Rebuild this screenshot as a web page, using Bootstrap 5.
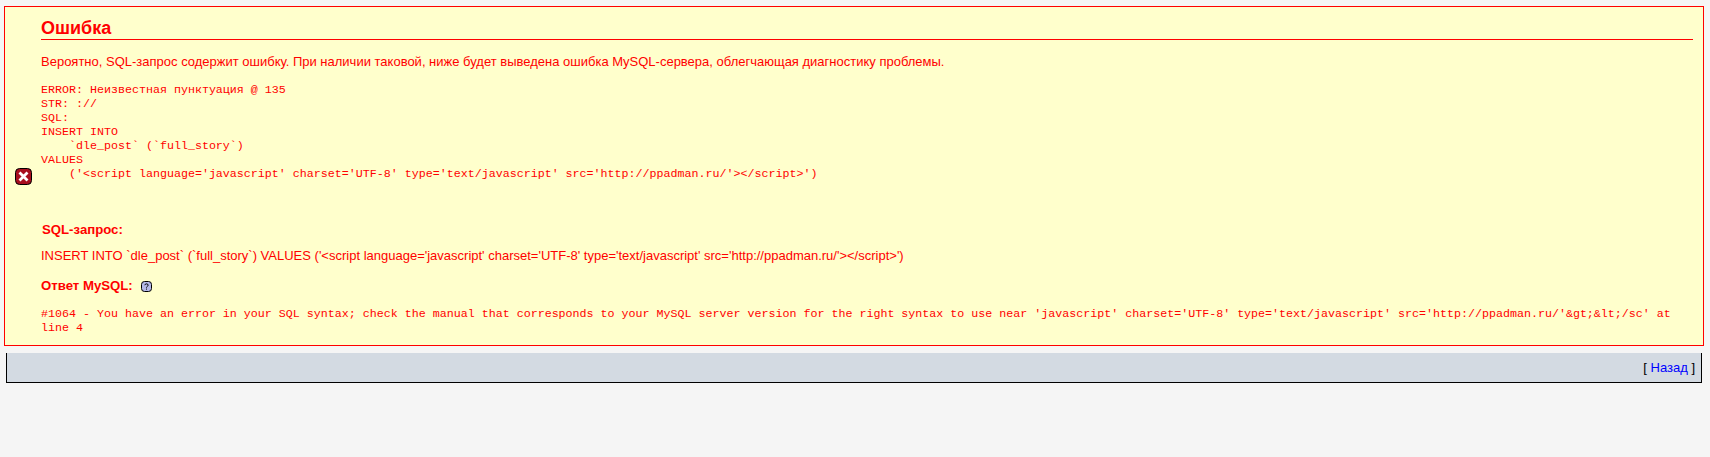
<!DOCTYPE html>
<html lang="ru">
<head>
<meta charset="utf-8">
<title>Ошибка</title>
<link href="https://cdn.jsdelivr.net/npm/bootstrap@5.3.0/dist/css/bootstrap.min.css" rel="stylesheet">
<style>
html,body{height:100%}
body{background:#f5f5f5;font-family:"Liberation Sans",Arial,sans-serif;font-size:13px;line-height:15px;color:#000;padding:6px 6px 0 4px}
.err-box{width:1700px;height:340px;background:#ffc;border:1px solid #f00;color:#f00}
.err-ico{width:36px;padding-left:10px}
.err-ico svg{display:block}
.err-main{padding-top:11px;padding-right:10px;align-self:flex-start;min-width:0;flex:1 1 auto}
.err-title{font-size:18px;line-height:20px;font-weight:700;margin:0;padding-bottom:1px;border-bottom:1px solid #f00;color:#f00}
.err-lead{margin:14px 0 0}
.err-pre{font-family:"Liberation Mono","Courier New",monospace;font-size:11.67px;line-height:14px;margin:14px 0 0;color:#f00;overflow:visible;white-space:pre}
.err-sub{font-size:13.2px;line-height:16px;font-weight:700;margin:0}
.err-sub1{margin:41px 0 0 1px}
.err-query{margin:10px 0 0}
.err-sub2{margin:15px 0 0;display:flex;align-items:center;gap:8px}
.err-resp{font-family:"Liberation Mono","Courier New",monospace;font-size:11.67px;line-height:14px;margin:13px 0 0;color:#f00;padding-right:9px}
.back-bar{width:1696px;height:30px;margin:7px 0 0 2px;background:#d3dae2;border-left:1px solid #000;border-right:1px solid #000;border-bottom:1px solid #000;padding-right:6px}
.back-bar a{color:#00f;text-decoration:none}
</style>
</head>
<body>
<div class="err-box d-flex align-items-center">
  <div class="err-ico flex-shrink-0">
    <svg width="17" height="17" viewBox="0 0 17 17"><rect x=".5" y=".5" width="16" height="16" rx="4" fill="#a80e1e" stroke="#000"/><path d="M4.500 4.500l8 8M12.500 4.500l-8 8" stroke="#fff" stroke-width="2.8"/></svg>
  </div>
  <div class="err-main">
    <h1 class="err-title">Ошибка</h1>
    <p class="err-lead">Вероятно, SQL-запрос содержит ошибку. При наличии таковой, ниже будет выведена ошибка MySQL-сервера, облегчающая диагностику проблемы.</p>
<pre class="err-pre">ERROR: Неизвестная пунктуация @ 135
STR: ://
SQL:
INSERT INTO
    `dle_post` (`full_story`)
VALUES
    ('&lt;script language='javascript' charset='UTF-8' type='text/javascript' src='http://ppadman.ru/'&gt;&lt;/script&gt;')</pre>
    <p class="err-sub err-sub1">SQL-запрос:</p>
    <p class="err-query">INSERT INTO `dle_post` (`full_story`) VALUES ('&lt;script language='javascript' charset='UTF-8' type='text/javascript' src='http://ppadman.ru/'&gt;&lt;/script&gt;')</p>
    <p class="err-sub err-sub2"><span>Ответ MySQL:</span>
      <svg width="11" height="11" viewBox="0 0 11 11"><rect x=".5" y=".5" width="10" height="10" rx="3" fill="#b4b8e8" stroke="#000"/><path d="M3.800 4.200C3.800 2.400 7.200 2.400 7.200 4.200 7.200 5.300 5.500 5.300 5.500 6.600M5.500 7.600v1" fill="none" stroke="#000"/></svg>
    </p>
    <p class="err-resp">#1064 - You have an error in your SQL syntax; check the manual that corresponds to your MySQL server version for the right syntax to use near 'javascript' charset='UTF-8' type='text/javascript' src='http://ppadman.ru/'&amp;gt;&amp;lt;/sc' at line 4</p>
  </div>
</div>
<div class="back-bar d-flex align-items-center justify-content-end">[&nbsp;<a href="#">Назад</a>&nbsp;]</div>
<script src="https://cdn.jsdelivr.net/npm/bootstrap@5.3.0/dist/js/bootstrap.bundle.min.js"></script>
</body>
</html>
